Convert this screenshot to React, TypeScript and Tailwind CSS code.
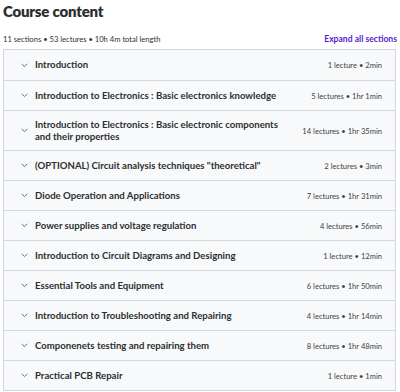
import React from "react";

const sections: { title: React.ReactNode; meta: string; tall?: boolean }[] = [
  { title: "Introduction", meta: "1 lecture • 2min" },
  { title: "Introduction to Electronics : Basic electronics knowledge", meta: "5 lectures • 1hr 1min" },
  {
    title: (
      <>
        Introduction to Electronics : Basic electronic components
        <br />
        and their properties
      </>
    ),
    meta: "14 lectures • 1hr 35min",
    tall: true,
  },
  { title: '(OPTIONAL) Circuit analysis techniques "theoretical"', meta: "2 lectures • 3min" },
  { title: "Diode Operation and Applications", meta: "7 lectures • 1hr 31min" },
  { title: "Power supplies and voltage regulation", meta: "4 lectures • 56min" },
  { title: "Introduction to Circuit Diagrams and Designing", meta: "1 lecture • 12min" },
  { title: "Essential Tools and Equipment", meta: "6 lectures • 1hr 50min" },
  { title: "Introduction to Troubleshooting and Repairing", meta: "4 lectures • 1hr 14min" },
  { title: "Componenets testing and repairing them", meta: "8 lectures • 1hr 48min" },
  { title: "Practical PCB Repair", meta: "1 lecture • 1min" },
];

function Chevron() {
  return (
    <svg width="7" height="5" viewBox="0 0 7 5" className="shrink-0">
      <path d="M1 1.2 L3.5 3.6 L6 1.2" fill="none" stroke="#6a6f73" strokeWidth="1" strokeLinecap="round" strokeLinejoin="round" />
    </svg>
  );
}

export default function App() {
  return (
    <div
      className="w-[400px] h-[392px] bg-white text-[#2d2f31] px-[3px] overflow-hidden"
      style={{ fontFamily: "Lato, 'Liberation Sans', sans-serif" }}
    >
      <h2 className="text-[15px] font-extrabold leading-[22px] pt-[0px] tracking-[-0.2px]">Course content</h2>
      <div className="flex items-end justify-between mt-[12px] pb-[5px]">
        <span className="text-[7.6px] leading-[10px] text-[#2d2f31]">11 sections • 53 lectures • 10h 4m total length</span>
        <span className="text-[8.6px] leading-[10px] font-bold text-[#5624d0]">Expand all sections</span>
      </div>
      <div className="border border-[#d1d7dc] w-[393px]">
        {sections.map((s, i) => (
          <div
            key={i}
            className={`flex items-center bg-[#f7f9fa] pl-[17px] pr-[13px] ${s.tall ? "h-[40px]" : "h-[30px]"} ${i > 0 ? "border-t border-[#d1d7dc]" : ""}`}
          >
            <Chevron />
            <div className="ml-[7px] flex-1 text-[9.6px] font-bold leading-[12px] text-[#2d2f31]">{s.title}</div>
            <div className="text-[7.6px] leading-[10px] text-[#3e4143] whitespace-nowrap">{s.meta}</div>
          </div>
        ))}
      </div>
    </div>
  );
}
